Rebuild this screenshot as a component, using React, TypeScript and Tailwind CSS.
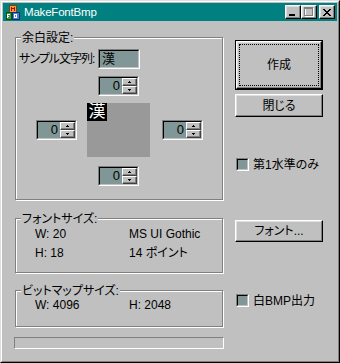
import React from "react";

const FONT = "font-['Liberation_Sans','Noto_Sans_CJK_JP',sans-serif] [font-feature-settings:'palt']";

function Raised({ className = "", children }: { className?: string; children?: React.ReactNode }) {
  return (
    <div
      className={
        "border border-t-white border-l-white border-b-black border-r-black shadow-[inset_-1px_-1px_0_#808080,inset_1px_1px_0_#dfdfdf] bg-[#c0c0c0] flex items-center justify-center " +
        className
      }
    >
      {children}
    </div>
  );
}

function Sunken({ className = "", innerClass = "", children }: { className?: string; innerClass?: string; children?: React.ReactNode }) {
  return (
    <div className={"flex border border-t-[#808080] border-l-[#808080] border-b-white border-r-white " + className}>
      <div className={"flex-1 flex border border-t-black border-l-black border-b-[#c0c0c0] border-r-[#c0c0c0] " + innerClass}>
        {children}
      </div>
    </div>
  );
}

function Arrow({ up }: { up: boolean }) {
  return (
    <svg width="3" height="2" viewBox="0 0 3 2" shapeRendering="crispEdges">
      {up ? (
        <>
          <rect x="1" y="0" width="1" height="1" fill="#000" />
          <rect x="0" y="1" width="3" height="1" fill="#000" />
        </>
      ) : (
        <>
          <rect x="0" y="0" width="3" height="1" fill="#000" />
          <rect x="1" y="1" width="1" height="1" fill="#000" />
        </>
      )}
    </svg>
  );
}

function Spin() {
  return (
    <Sunken className="w-[41px] h-[20px]" innerClass="bg-[#819797]">
      <span className="flex-1 text-right pr-[2px] leading-[16px] text-[13px]">0</span>
      <div className="w-[15px] flex flex-col">
        <div className="h-[8px] flex items-center justify-center border border-t-white border-l-white border-b-[#404040] border-r-[#404040] bg-[#c0c0c0] shadow-[inset_-1px_-1px_0_#808080]">
          <Arrow up />
        </div>
        <div className="h-[8px] flex items-center justify-center border border-t-white border-l-white border-b-[#404040] border-r-[#404040] bg-[#c0c0c0] shadow-[inset_-1px_-1px_0_#808080]">
          <Arrow up={false} />
        </div>
      </div>
    </Sunken>
  );
}

function Group({ label, className = "", children }: { label: string; className?: string; children?: React.ReactNode }) {
  return (
    <div className={"relative w-[208px] border border-[#808080] shadow-[inset_1px_1px_0_#fff,1px_1px_0_#fff] " + className}>
      <span className="absolute top-[-7px] left-[5px] px-px bg-[#c0c0c0] leading-[14px] whitespace-nowrap">{label}</span>
      {children}
    </div>
  );
}

function Check({ label }: { label: string }) {
  return (
    <div className="flex items-center h-[13px]">
      <Sunken className="w-[13px] h-[13px] ml-px" innerClass="bg-[#819797]" />
      <span className="ml-[4px] leading-[14px] whitespace-nowrap">{label}</span>
    </div>
  );
}

function AppIcon() {
  return (
    <svg width="16" height="16" viewBox="0 0 16 16" shapeRendering="crispEdges">
      <rect x="4" y="1" width="7" height="7" fill="#f0a040" stroke="#804000" strokeWidth="1" />
      <rect x="6" y="3" width="1" height="4" fill="#c00000" />
      <rect x="9" y="3" width="1" height="4" fill="#c00000" />
      <rect x="7" y="4" width="2" height="1" fill="#c00000" />
      <rect x="1" y="8" width="5" height="7" fill="#30a040" stroke="#105010" strokeWidth="1" />
      <rect x="2" y="10" width="1" height="4" fill="#fff" />
      <rect x="2" y="10" width="3" height="1" fill="#fff" />
      <rect x="2" y="12" width="2" height="1" fill="#fff" />
      <rect x="7" y="8" width="7" height="7" fill="#4080e0" stroke="#103070" strokeWidth="1" />
      <rect x="9" y="10" width="1" height="4" fill="#fff" />
      <rect x="9" y="10" width="3" height="1" fill="#fff" />
      <rect x="9" y="13" width="3" height="1" fill="#fff" />
      <rect x="11" y="11" width="1" height="2" fill="#fff" />
    </svg>
  );
}

function CloseGlyph() {
  const rows = [
    [0, 1, 6, 7],
    [1, 2, 5, 6],
    [2, 3, 4, 5],
    [3, 4],
    [2, 3, 4, 5],
    [1, 2, 5, 6],
    [0, 1, 6, 7],
  ];
  return (
    <svg width="8" height="7" viewBox="0 0 8 7" shapeRendering="crispEdges">
      {rows.map((cols, y) => cols.map((x) => <rect key={y + "-" + x} x={x} y={y} width="1" height="1" fill="#000" />))}
    </svg>
  );
}

function TitleBar() {
  return (
    <div className="h-[18px] bg-[#008080] flex items-center pl-[2px] pr-[2px]">
      <AppIcon />
      <span className="ml-[3px] text-white text-[11.5px] leading-[14px] tracking-[-0.2px]">MakeFontBmp</span>
      <div className="ml-auto flex items-center">
        <Raised className="w-[16px] h-[14px] items-end pb-[2px] justify-start pl-[3px]">
          <div className="w-[6px] h-[2px] bg-black" />
        </Raised>
        <Raised className="w-[16px] h-[14px]">
          <svg width="10" height="10" viewBox="0 0 10 10" shapeRendering="crispEdges">
            <rect x="1.5" y="1.5" width="8" height="8" fill="none" stroke="#fff" />
            <rect x="0.5" y="0.5" width="8" height="8" fill="none" stroke="#808080" />
            <rect x="1" y="1" width="7" height="1" fill="#808080" />
          </svg>
        </Raised>
        <Raised className="w-[16px] h-[14px] ml-[2px]">
          <CloseGlyph />
        </Raised>
      </div>
    </div>
  );
}

export default function App() {
  return (
    <div className={"w-[340px] h-[363px] border border-t-[#dfdfdf] border-l-[#dfdfdf] border-b-black border-r-black bg-[#c0c0c0] text-[12px] text-black " + FONT}>
      <div className="h-full border border-t-white border-l-white border-b-[#808080] border-r-[#808080] p-px flex flex-col">
        <TitleBar />
        <div className="flex">
          {/* left column */}
          <div className="ml-[12px] w-[209px] flex flex-col">
            <Group label="余白設定:" className="mt-[16px] h-[163px]">
              <div className="flex flex-col">
                <div className="mt-[11px] flex items-center pl-[3px]">
                  <span className="w-[79px] leading-[20px] whitespace-nowrap tracking-[-1px]">サンプル文字列:</span>
                  <Sunken className="w-[42px] h-[20px]" innerClass="bg-[#819797] items-center pl-[2px]">
                    <span className="leading-[16px] text-[13px]">漢</span>
                  </Sunken>
                </div>
                <div className="mt-[7px] ml-[82px]">
                  <Spin />
                </div>
                <div className="mt-[7px] flex items-center">
                  <div className="ml-[20px]">
                    <Spin />
                  </div>
                  <div className="ml-[10px] w-[63px] h-[54px] bg-[#999999]">
                    <div className="w-[20px] h-[18px] bg-black text-white text-[17px] leading-[18px] flex items-center justify-center overflow-hidden">
                      漢
                    </div>
                  </div>
                  <div className="ml-[12px]">
                    <Spin />
                  </div>
                </div>
                <div className="mt-[9px] ml-[82px]">
                  <Spin />
                </div>
              </div>
            </Group>

            <Group label="フォントサイズ:" className="mt-[18px] h-[55px]">
              <div className="grid grid-cols-[94px_1fr] pl-[19px] pt-[6px] leading-[19px] whitespace-nowrap">
                <span>W: 20</span>
                <span>MS UI Gothic</span>
                <span>H: 18</span>
                <span>14 ポイント</span>
              </div>
            </Group>

            <Group label="ビットマップサイズ:" className="mt-[17px] h-[37px]">
              <div className="grid grid-cols-[94px_1fr] pl-[19px] pt-[5px] leading-[19px] whitespace-nowrap">
                <span>W: 4096</span>
                <span>H: 2048</span>
              </div>
            </Group>

            <div className="mt-[10px] -ml-px w-[210px] h-[12px] border border-t-[#808080] border-l-[#808080] border-b-white border-r-white" />
          </div>

          {/* right column */}
          <div className="ml-[11px] w-[88px] flex flex-col">
            <div className="mt-[19px] h-[50px] border border-black flex">
              <Raised className="flex-1 items-stretch">
                <div className="m-[2px] flex-1 border border-dotted border-black flex items-center justify-center">
                  作成
                </div>
              </Raised>
            </div>
            <Raised className="mt-[4px] h-[23px]">閉じる</Raised>
            <div className="mt-[41px]">
              <Check label="第1水準のみ" />
            </div>
            <Raised className="mt-[49px] h-[22px]">フォント...</Raised>
            <div className="mt-[52px]">
              <Check label="白BMP出力" />
            </div>
          </div>
        </div>
      </div>
    </div>
  );
}
